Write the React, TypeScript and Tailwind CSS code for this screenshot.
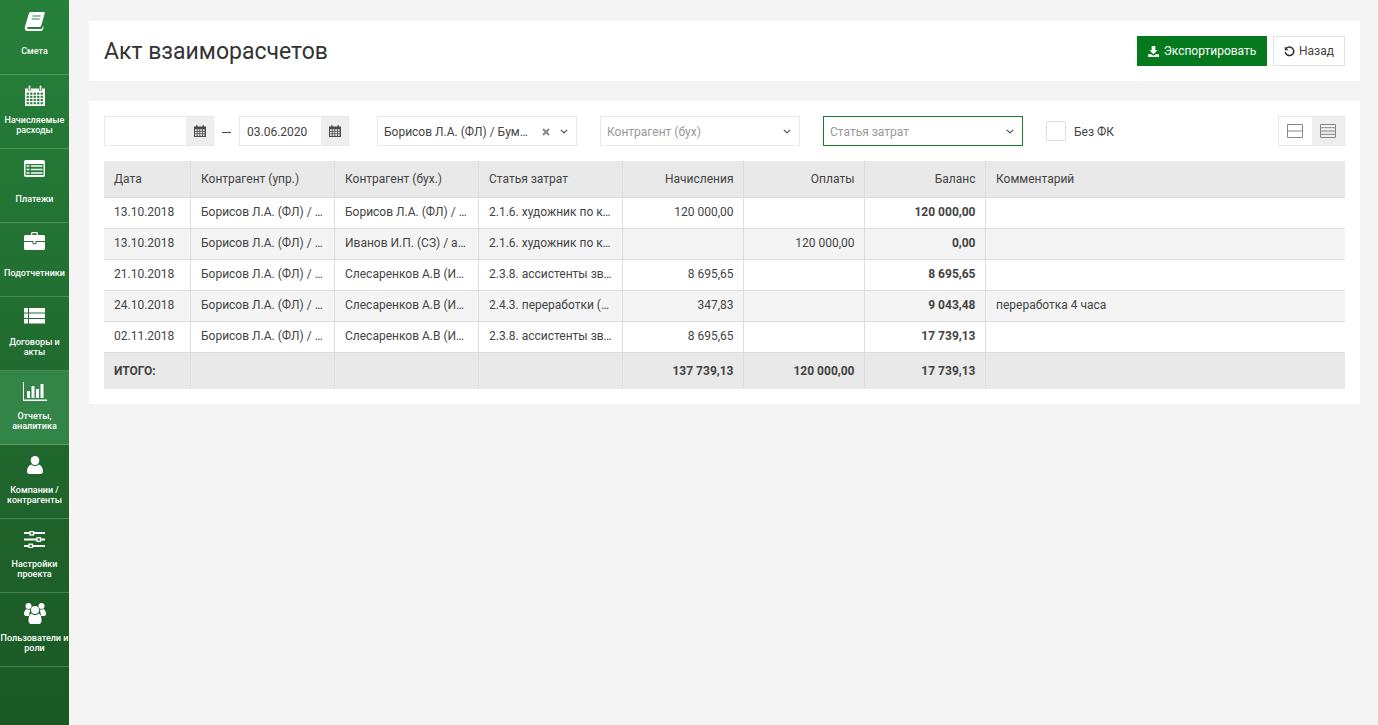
import React from 'react';

const BookIcon = () => (
  <svg width="22" height="20" viewBox="0 0 22 20">
    <path d="M7 1h12.500c1 0 1.500.7 1.200 1.600l-3.400 12c-.3 1-1 1.400-2 1.400H4.200c-.9 0-1.200.6-1 1.200.2.500.7.800 1.400.800h12.600c.5 0 .8-.3 1-.7l.6-2 .9.500-.7 2.500c-.3 1-1.100 1.700-2.200 1.700H3.600c-1.700 0-3-1.300-2.900-3 0-.5.100-1 .3-1.500L4.800 2.800C5.100 1.700 5.900 1 7 1z" fill="#fff" />
    <path d="M8.500 5h8M7.700 8h8" stroke="#26803a" strokeWidth="1" />
  </svg>
);

const CalendarIcon = () => (
  <svg width="20" height="21" viewBox="0 0 20 21">
    <path d="M0 3.500h3v2h3v-2h8v2h3v-2h3V21H0z" fill="#fff" />
    <rect x="3.700" y="0.500" width="1.600" height="4.500" rx="0.800" fill="#fff" />
    <rect x="14.700" y="0.500" width="1.600" height="4.500" rx="0.800" fill="#fff" />
    {[0, 1, 2, 3].map(r =>
      [0, 1, 2, 3, 4].map(c => (
        <rect key={`${r}-${c}`} x={1.6 + c * 3.5} y={7.6 + r * 3.2} width="2.300" height="2.100" fill="#26803a" />
      ))
    )}
  </svg>
);

const TableIcon = () => (
  <svg className="mb-[2px]" width="21" height="17" viewBox="0 0 21 17">
    <rect width="21" height="17" rx="2" fill="#fff" />
    <rect x="1.500" y="4" width="18" height="11" fill="#26803a" />
    <path d="M2.500 6h3M2.500 9.500h3M2.500 13h3M7 6h11.500M7 9.500h11.500M7 13h11.500" stroke="#fff" strokeWidth="1.500" />
  </svg>
);

const CaseIcon = () => (
  <svg className="mb-[4px]" width="21" height="18" viewBox="0 0 21 18">
    <path d="M7 3V1.500C7 .7 7.700 0 8.500 0h4c.8 0 1.500.7 1.500 1.500V3h5.500c.8 0 1.500.7 1.500 1.500V9H0V4.500C0 3.700.7 3 1.500 3zm1.300 0h4.400V1.300H8.300z" fill="#fff" fillRule="evenodd" />
    <path d="M0 10h8.500v1.500c0 .5.400.8.800.8h2.400c.4 0 .8-.3.800-.8V10H21v6.500c0 .8-.7 1.500-1.500 1.500h-18C.7 18 0 17.300 0 16.500z" fill="#fff" />
    <rect x="9.500" y="9" width="2" height="2.300" fill="#fff" />
  </svg>
);

const ListIcon = () => (
  <svg className="mb-[3px]" width="21" height="16" viewBox="0 0 21 16">
    {[0, 5.5, 11].map(y => (
      <g key={y} fill="#fff">
        <rect x="0" y={y} width="4" height="4.500" />
        <rect x="5" y={y} width="16" height="4.500" />
      </g>
    ))}
  </svg>
);

const ChartIcon = () => (
  <svg width="24" height="19" viewBox="0 0 24 19" fill="#fff">
    <path d="M0 0h1v17.500h23V19H0z" />
    <rect x="4" y="9" width="3" height="7" />
    <rect x="8.500" y="4" width="3" height="12" />
    <rect x="13" y="7" width="3" height="9" />
    <rect x="17.500" y="2" width="3" height="14" />
  </svg>
);

const UserIcon = () => (
  <svg width="16" height="18" viewBox="0 0 16 18" fill="#fff">
    <ellipse cx="8" cy="4.600" rx="4.300" ry="4.600" />
    <path d="M4.500 8.500C5.500 9.700 6.700 10.200 8 10.200s2.500-.5 3.500-1.700C14 9.300 16 11.500 16 15.500c0 1.500-1 2.500-2.500 2.500h-11C1 18 0 17 0 15.500 0 11.500 2 9.300 4.500 8.500z" />
  </svg>
);

const SlidersIcon = () => (
  <svg width="21" height="17" viewBox="0 0 21 17">
    <path d="M0 2h21M0 8.500h21M0 15h21" stroke="#fff" strokeWidth="2" />
    <rect x="6" y="0.500" width="3.500" height="3.500" fill="#26703a" stroke="#fff" strokeWidth="1.300" />
    <rect x="13" y="6.800" width="3.500" height="3.500" fill="#26703a" stroke="#fff" strokeWidth="1.300" />
    <rect x="5" y="13.200" width="3.500" height="3.500" fill="#26703a" stroke="#fff" strokeWidth="1.300" />
  </svg>
);

const UsersIcon = () => (
  <svg width="22" height="21" viewBox="0 0 22 21" fill="#fff">
    <circle cx="4.500" cy="3" r="3" />
    <circle cx="17.500" cy="3" r="3" />
    <path d="M0 11c0-3 1.500-4.500 3-5 1 1 2.500 1 3.500.5C6 7.500 5.500 9 5 13H2c-1 0-2-.8-2-2zM22 11c0-3-1.500-4.500-3-5-1 1-2.500 1-3.500.5.500 1 1 2.500 1.500 6.500h3c1 0 2-.8 2-1.500z" />
    <circle cx="11" cy="7" r="4" />
    <path d="M7.500 10.500c1 1 2.200 1.500 3.500 1.500s2.500-.5 3.500-1.500c2 .7 3 3 3 7 0 2-1 3.500-2.500 3.500H7c-1.500 0-2.500-1.500-2.500-3.500 0-4 1-6.300 3-7z" />
  </svg>
);

const SmallCalendar = () => (
  <svg width="12" height="12" viewBox="0 0 12 12">
    <path d="M0 1.500h12V12H0z" fill="#4a4a4a" />
    <rect x="2.200" y="0" width="1.200" height="2.500" fill="#4a4a4a" />
    <rect x="8.600" y="0" width="1.200" height="2.500" fill="#4a4a4a" />
    {[0, 1, 2].map(r =>
      [0, 1, 2, 3].map(c => (
        <rect key={`${r}-${c}`} x={1 + c * 2.6} y={4.2 + r * 2.5} width="1.800" height="1.700" fill="#e8e8e8" />
      ))
    )}
  </svg>
);

const Chevron = () => (
  <svg width="8" height="5" viewBox="0 0 8 5" fill="none">
    <path d="M.8.800 4 4l3.200-3.200" stroke="#555" strokeWidth="1.200" />
  </svg>
);

const menu = [
  { icon: <BookIcon />, label: ['Смета'] },
  { icon: <CalendarIcon />, label: ['Начисляемые', 'расходы'] },
  { icon: <TableIcon />, label: ['Платежи'] },
  { icon: <CaseIcon />, label: ['Подотчетники'] },
  { icon: <ListIcon />, label: ['Договоры и', 'акты'] },
  { icon: <ChartIcon />, label: ['Отчеты,', 'аналитика'], active: true },
  { icon: <UserIcon />, label: ['Компании /', 'контрагенты'] },
  { icon: <SlidersIcon />, label: ['Настройки', 'проекта'] },
  { icon: <UsersIcon />, label: ['Пользователи и', 'роли'] },
];

const boris = 'Борисов Л.А. (ФЛ) / Бумага';
const sles = 'Слесаренков А.В (ИП) / звук';
const rows = [
  { date: '13.10.2018', a: boris, b: boris, c: '2.1.6. художник по костюмам', d: '120 000,00', e: '', f: '120 000,00', g: '' },
  { date: '13.10.2018', a: boris, b: 'Иванов И.П. (СЗ) / аренда', c: '2.1.6. художник по костюмам', d: '', e: '120 000,00', f: '0,00', g: '' },
  { date: '21.10.2018', a: boris, b: sles, c: '2.3.8. ассистенты звукорежиссера', d: '8 695,65', e: '', f: '8 695,65', g: '' },
  { date: '24.10.2018', a: boris, b: sles, c: '2.4.3. переработки (звук)', d: '347,83', e: '', f: '9 043,48', g: 'переработка 4 часа' },
  { date: '02.11.2018', a: boris, b: sles, c: '2.3.8. ассистенты звукорежиссера', d: '8 695,65', e: '', f: '17 739,13', g: '' },
];

// у первой колонки нет левой рамки, поэтому отступ свой
const first = 'pl-[10px] pr-[10px]';
const left = 'pl-[10.5px] pr-[9px]';
const right = 'pl-[11px] pr-[9px]';
const th = 'h-[36px] border border-[#dddddd] border-t-0 font-normal';
const td = 'h-[31px] border border-[#dddddd] pb-px truncate';
const tf = 'h-[37px] border border-[#dddddd] border-b-0 font-bold';

const App = () => {
  return (
    <div className="flex min-h-screen bg-[#f4f4f4] font-['Roboto',sans-serif] text-[12px] text-[#444444]">
      {/* Меню */}
      <aside className="w-[69px] shrink-0 bg-gradient-to-b from-[#26803a] to-[#1b5825] pt-px">
        {menu.map(m => (
          <div
            key={m.label[0]}
            className={`flex h-[74px] flex-col items-center border-b border-white/20 pt-[9px] ${m.active ? 'bg-[#338547]' : ''}`}
          >
            <div className="flex h-[22px] items-center justify-center">{m.icon}</div>
            <div className="mt-[2px] flex h-[34px] flex-col justify-center text-center text-[9px] leading-[10px] font-medium whitespace-nowrap text-white">
              {m.label.map(l => <div key={l}>{l}</div>)}
            </div>
          </div>
        ))}
      </aside>

      <main className="flex-1 pt-[21px] pr-[18px] pl-[20px]">
        <header className="flex h-[60px] items-center justify-between bg-white pr-[15px] pl-[15px]">
          <h1 className="pt-[2px] text-[23px] text-[#333333]">Акт взаиморасчетов</h1>
          <div className="flex gap-[6px]">
            <button className="flex h-[30px] w-[130px] items-center justify-center gap-[5px] bg-[#047a1c] text-[12px] text-white">
              <svg width="11" height="11" viewBox="0 0 12 12" fill="#fff">
                <path d="M4 0h4v4.500h2.500L6 9 1.500 4.500H4zM0 9h3.500L6 10.500 8.500 9H12v3H0z" />
              </svg>
              Экспортировать
            </button>
            <button className="flex h-[30px] w-[72px] items-center justify-center gap-[4px] border border-[#e2e2e2] bg-white text-[#444444]">
              <svg width="11" height="11" viewBox="0 0 11 11" fill="none">
                <path d="M2.300 2.300A4.300 4.300 0 1 1 1.200 6" stroke="#333" strokeWidth="1.500" />
                <path d="M.8 .5v3.700h3.700z" fill="#333" />
              </svg>
              Назад
            </button>
          </div>
        </header>

        <section className="mt-[20px] bg-white p-[15px]">
          <div className="flex h-[30px] items-center">
            <div className="flex h-[30px] w-[110px] border border-[#e8e8e8]">
              <div className="flex-1" />
              <div className="flex w-[27px] items-center justify-center bg-[#eeeeee]"><SmallCalendar /></div>
            </div>
            <div className="mx-[8px] mt-[2px] h-px w-[9px] bg-[#444444]" />
            <div className="flex h-[30px] w-[110px] border border-[#e8e8e8]">
              <div className="flex flex-1 items-center pt-px pl-[7px]">03.06.2020</div>
              <div className="flex w-[27px] items-center justify-center bg-[#eeeeee]"><SmallCalendar /></div>
            </div>
            <div className="ml-[28px] flex h-[30px] w-[200px] items-center border border-[#e8e8e8] pt-px pr-[8px] pl-[6px]">
              <span className="w-[145px] truncate">{boris}</span>
              <svg className="ml-[13px]" width="8" height="8" viewBox="0 0 8 8" fill="none">
                <path d="M1 1l6 6M7 1 1 7" stroke="#888888" strokeWidth="2" />
              </svg>
              <span className="ml-auto flex"><Chevron /></span>
            </div>
            <div className="ml-[23px] flex h-[30px] w-[200px] items-center justify-between border border-[#e8e8e8] pt-px pr-[8px] pl-[6px] text-[#999999]">
              Контрагент (бух)
              <Chevron />
            </div>
            <div className="ml-[23px] flex h-[30px] w-[200px] items-center justify-between border border-[#17802c] pt-px pr-[8px] pl-[6px] text-[#999999]">
              Статья затрат
              <Chevron />
            </div>
            <div className="ml-[23px] h-[20px] w-[20px] rounded-[2px] border border-[#dddddd]" />
            <span className="ml-[8px] pt-px">Без ФК</span>
            <div className="ml-auto flex h-[30px] w-[67px] border border-[#e8e8e8]">
              <div className="flex flex-1 items-center justify-center">
                <svg width="16" height="14" viewBox="0 0 16 14" fill="none" stroke="#888">
                  <path d="M.5.500h15v13H.5zM.5 7h15" />
                </svg>
              </div>
              <div className="flex flex-1 items-center justify-center bg-[#eeeeee]">
                <svg width="16" height="14" viewBox="0 0 16 14" fill="none" stroke="#888">
                  <path d="M.5.500h15v13H.5zM.5 3.700h15M.5 7h15M.5 10.300h15" />
                </svg>
              </div>
            </div>
          </div>

          <table className="mt-[15px] w-full table-fixed border-collapse">
            <colgroup>
              <col className="w-[86px]" />
              <col className="w-[144px]" />
              <col className="w-[144px]" />
              <col className="w-[144px]" />
              <col className="w-[121px]" />
              <col className="w-[121px]" />
              <col className="w-[121px]" />
              <col />
            </colgroup>
            <thead>
              <tr className="bg-[#e9e9e9]">
                <th className={`${th} ${first} border-l-0 text-left`}>Дата</th>
                <th className={`${th} ${left} text-left`}>Контрагент (упр.)</th>
                <th className={`${th} ${left} text-left`}>Контрагент (бух.)</th>
                <th className={`${th} ${left} text-left`}>Статья затрат</th>
                <th className={`${th} ${right} text-right`}>Начисления</th>
                <th className={`${th} ${right} text-right`}>Оплаты</th>
                <th className={`${th} ${right} text-right`}>Баланс</th>
                <th className={`${th} ${left} border-r-0 text-left`}>Комментарий</th>
              </tr>
            </thead>
            <tbody>
              {rows.map((r, i) => (
                <tr key={i} className={i % 2 === 1 ? 'bg-[#f4f4f4]' : 'bg-white'}>
                  <td className={`${td} ${first} border-l-0`}>{r.date}</td>
                  <td className={`${td} ${left}`}>{r.a}</td>
                  <td className={`${td} ${left}`}>{r.b}</td>
                  <td className={`${td} ${left}`}>{r.c}</td>
                  <td className={`${td} ${right} text-right`}>{r.d}</td>
                  <td className={`${td} ${right} text-right`}>{r.e}</td>
                  <td className={`${td} ${right} text-right font-bold`}>{r.f}</td>
                  <td className={`${td} ${left} border-r-0`}>{r.g}</td>
                </tr>
              ))}
            </tbody>
            <tfoot>
              <tr className="bg-[#e9e9e9]">
                <td className={`${tf} ${first} border-l-0`}>ИТОГО:</td>
                <td className={tf} />
                <td className={tf} />
                <td className={tf} />
                <td className={`${tf} ${right} text-right`}>137 739,13</td>
                <td className={`${tf} ${right} text-right`}>120 000,00</td>
                <td className={`${tf} ${right} text-right`}>17 739,13</td>
                <td className={`${tf} border-r-0`} />
              </tr>
            </tfoot>
          </table>
        </section>
      </main>
    </div>
  );
};

export default App;
